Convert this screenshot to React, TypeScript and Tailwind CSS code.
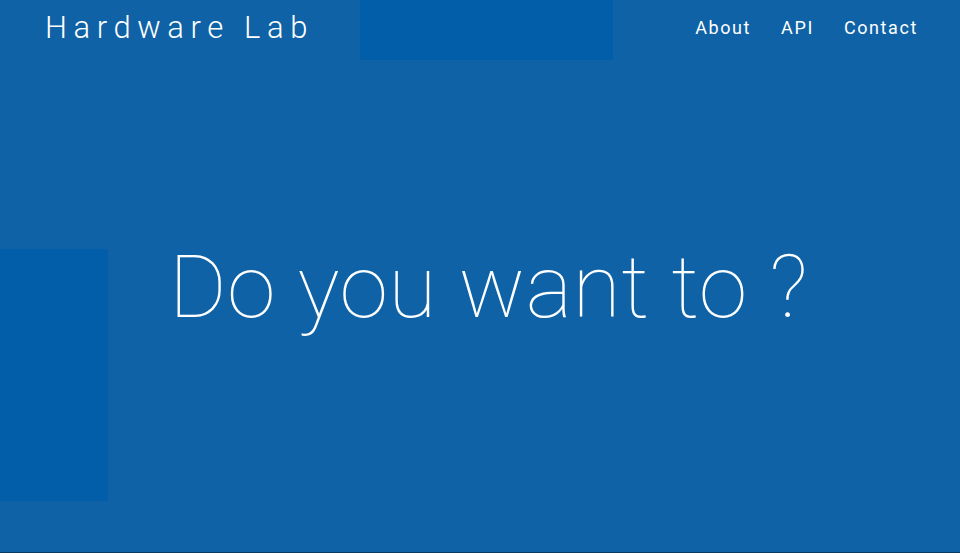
export default function App() {
  return (
    <div
      className="relative h-[553px] w-[960px] overflow-hidden bg-[#0e62a5] text-white"
      style={{ fontFamily: "Roboto, 'Noto Sans', sans-serif" }}
    >
      {/* decorative squares */}
      <div className="absolute left-[360px] top-0 h-[60px] w-[253px] bg-[#025ea8]" />
      <div className="absolute left-0 top-[249px] h-[252px] w-[108px] bg-[#025ea8]" />

      <div className="relative flex h-[552px] flex-col">
        <header className="flex h-[54px] items-center justify-between pl-[45px] pr-[42px]">
          <span className="text-[31px] font-light leading-none tracking-[6.6px]">Hardware Lab</span>
          <nav className="flex items-center gap-[30px] text-[18px] font-normal tracking-[1.6px]">
            <a>About</a>
            <a>API</a>
            <a>Contact</a>
          </nav>
        </header>
        <main className="flex flex-1 items-start justify-center pl-[17px] pt-[178px]">
          <h1 className="text-[88px] font-thin leading-[110px] tracking-[0.5px]">Do you want to ?</h1>
        </main>
      </div>
      <div className="h-px bg-[#0b3a60]" />
    </div>
  );
}
